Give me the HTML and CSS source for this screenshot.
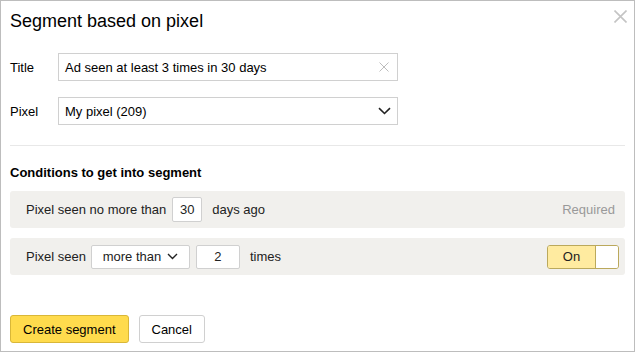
FILE: index.html
```html
<!DOCTYPE html>
<html lang="en">
<head>
  <meta charset="UTF-8">
  <title>Segment based on pixel</title>
  <link rel="stylesheet" href="styles.css">
</head>
<body>
  <div class='dialog'>
    <button class='close' type='button'>
      <svg width="13" height="13" viewBox="0 0 13 13"><path d="M0.5 0.5L12.5 12.5M12.5 0.5L0.5 12.5" stroke="#c4c4c4" stroke-width="1.6" fill="none"/></svg>
    </button>
    <h1>Segment based on pixel</h1>
    <div class='field first'>
      <label>Title</label>
      <div class='input'>
        <span class='value'>Ad seen at least 3 times in 30 days</span>
        <svg class='clear' width="10" height="10" viewBox="0 0 10 10"><path d="M0.5 0.5L9.5 9.5M9.5 0.5L0.5 9.5" stroke="#bdbdbd" stroke-width="1" fill="none"/></svg>
      </div>
    </div>
    <div class='field'>
      <label>Pixel</label>
      <div class='input'>
        <span class='value'>My pixel (209)</span>
        <svg class='arrow' width="13" height="8" viewBox="0 0 13 8"><path d="M1 1.2L6.5 6.5L12 1.2" stroke="#222" stroke-width="1.6" fill="none"/></svg>
      </div>
    </div>
    <hr>
    <h2>Conditions to get into segment</h2>
    <div class='cond'>
      <span>Pixel seen no more than</span>
      <span class='box num30'>30</span>
      <span>days ago</span>
      <span class='required'>Required</span>
    </div>
    <div class='cond second'>
      <span>Pixel seen</span>
      <span class='box select'>more than
        <svg width="11" height="7" viewBox="0 0 11 7"><path d="M1 1L5.5 5.5L10 1" stroke="#222" stroke-width="1.4" fill="none"/></svg>
      </span>
      <span class='box num2'>2</span>
      <span>times</span>
      <span class='toggle'><span class='on'>On</span><span class='knob'></span></span>
    </div>
    <div class='actions'>
      <button class='btn primary' type='button'>Create segment</button>
      <button class='btn' type='button'>Cancel</button>
    </div>
  </div>
</body>
</html>
```

FILE: styles.css
```css
* {
  margin: 0;
  padding: 0;
  box-sizing: border-box;
}
body {
  background-color: #fff;
  font-family: "Liberation Sans", Arial, sans-serif;
  font-size: 13px;
  color: #000;
}
.dialog {
  position: relative;
  width: 635px;
  height: 352px;
  border: 1px solid #bdbdbd;
  padding: 9px 9px 0 9px;
}
.close {
  position: absolute;
  top: 9px;
  right: 6px;
  border: 0;
  background: none;
  width: 15px;
  height: 15px;
}
h1 {
  font-size: 18px;
  font-weight: normal;
  line-height: 22px;
  color: #000;
}
.field {
  display: flex;
  align-items: center;
  margin-top: 16px;
}
.field.first {
  margin-top: 21px;
}
.field label {
  width: 48px;
  font-size: 13px;
  color: #000;
}
.input {
  display: flex;
  align-items: center;
  width: 340px;
  height: 28px;
  border: 1px solid #d0d0d0;
  padding: 0 6px 0 6px;
}
.input .value {
  flex: 1;
}
.input .clear {
  margin-right: 2px;
}
hr {
  border: 0;
  border-top: 1px solid #e8e8e8;
  margin-top: 20px;
}
h2 {
  font-size: 13px;
  font-weight: bold;
  line-height: 16px;
  margin-top: 19px;
}
.cond {
  display: flex;
  align-items: center;
  height: 37px;
  margin-top: 10px;
  padding: 0 10px 0 16px;
  background-color: #f1f0ed;
  border-radius: 3px;
  color: #222;
}
.cond.second {
  padding-right: 6px;
}
.box {
  display: inline-flex;
  align-items: center;
  justify-content: center;
  height: 25px;
  background: #fff;
  border: 1px solid #d0d0d0;
  border-radius: 2px;
}
.num30 {
  width: 30px;
  margin: 0 10px 0 6px;
}
.select {
  height: 24px;
  width: 99px;
  margin: 0 6px 0 5px;
  gap: 6px;
}
.num2 {
  height: 24px;
  width: 44px;
  margin-right: 10px;
}
.required {
  margin-left: auto;
  color: #999;
}
.toggle {
  display: flex;
  margin-left: auto;
  height: 24px;
  width: 72px;
  border: 1px solid #bba95c;
  border-radius: 3px;
  overflow: hidden;
}
.toggle .on {
  flex: 1;
  display: flex;
  align-items: center;
  justify-content: center;
  background-color: #ffeba0;
  border-right: 1px solid #bba95c;
}
.toggle .knob {
  width: 22px;
  background: #fff;
}
.actions {
  display: flex;
  gap: 10px;
  margin-top: 40px;
}
.btn {
  height: 28px;
  padding: 0 12px;
  font-family: "Liberation Sans", Arial, sans-serif;
  font-size: 13px;
  color: #000;
  background: #fff;
  border: 1px solid #d0d0d0;
  border-radius: 3px;
}
.btn.primary {
  background-color: #ffdb4d;
  border-color: #d9b738;
}
```
